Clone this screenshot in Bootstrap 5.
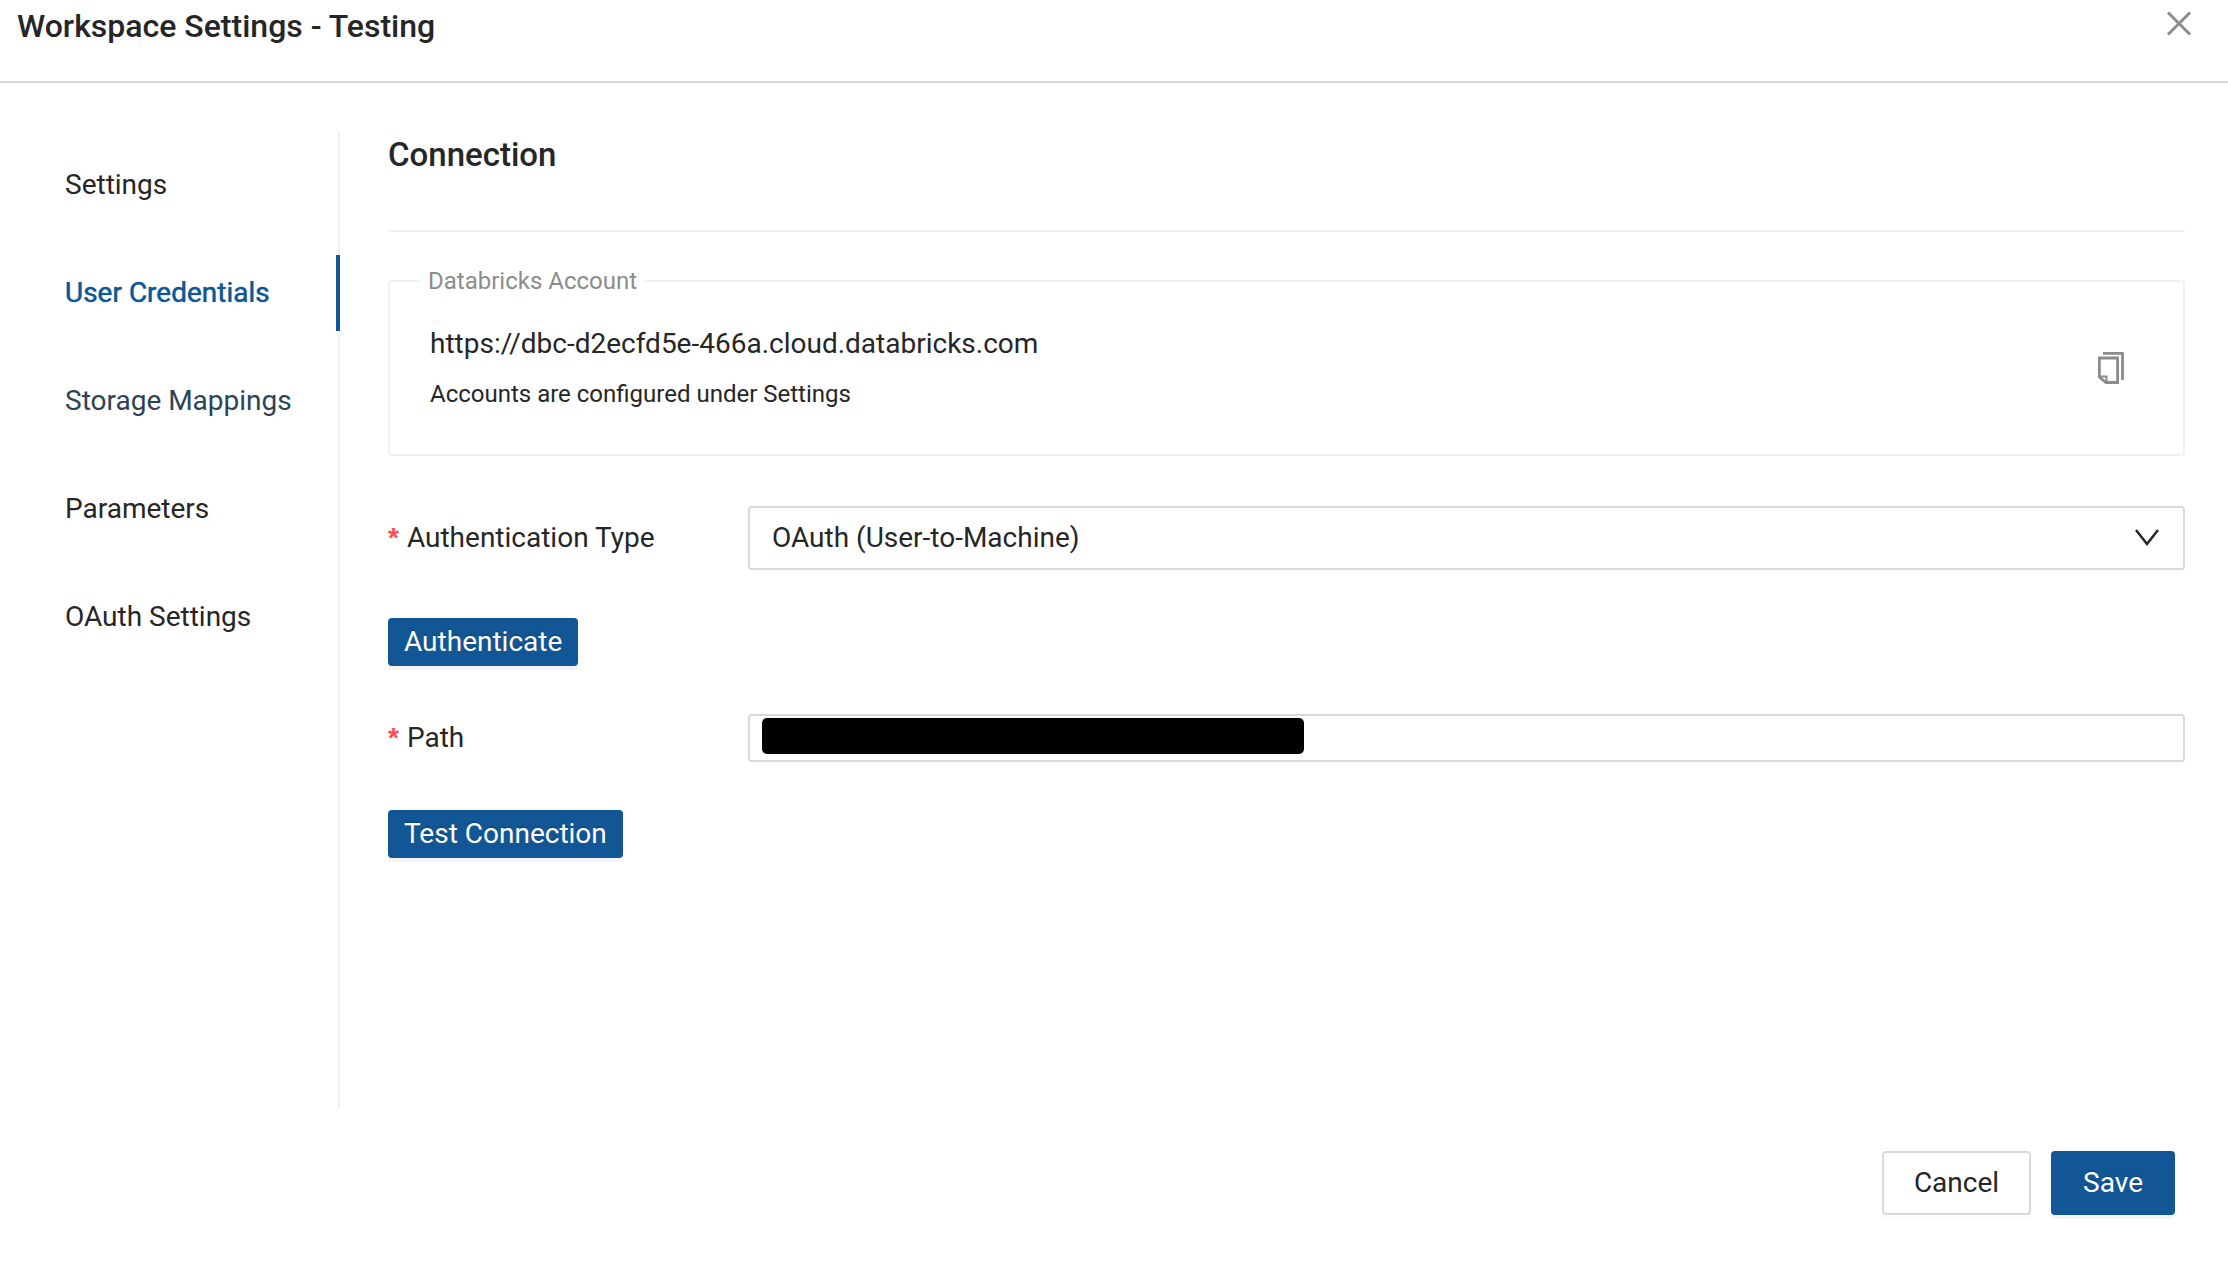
<!DOCTYPE html>
<html lang="en">
<head>
<meta charset="utf-8">
<meta name="viewport" content="width=device-width, initial-scale=1">
<title>Workspace Settings - Testing</title>
<link href="https://cdn.jsdelivr.net/npm/bootstrap@5.3.0/dist/css/bootstrap.min.css" rel="stylesheet">
<style>
  :root { --brand: #125695; --ink: #262626; --line: #d9d9d9; --soft: #f0f0f0; }
  body { font-family: Roboto, "Liberation Sans", sans-serif; font-size: 28px; line-height: 44px; color: var(--ink); background: #fff; }
  .ws-head { padding: 4px 34px 33px 17px; border-bottom: 2px solid var(--line); }
  .ws-title { font-size: 32px; line-height: 44px; font-weight: 500; }
  .pane-head .ws-title { font-size: 33px; }
  .icon-btn { border: 0; background: none; padding: 0; display: flex; color: #8c8c8c; }
  .ws-body { padding: 48px 43px 0 17px; }
  .side { width: 323px; flex: none; min-height: 978px; padding-top: 16px; border-right: 2px solid var(--soft); gap: 32px; }
  .side-link { padding: 16px 48px; margin-right: -2px; border-right: 4px solid transparent; color: var(--ink); text-decoration: none; white-space: nowrap; }
  .side-link.active { color: var(--brand); border-color: var(--brand); text-shadow: 0 0 1px currentColor; }
  .side-link.muted { color: #2c4356; }
  .pane { padding-left: 48px; min-width: 0; }
  .pane-head { padding: 2px 0 53px; border-bottom: 2px solid var(--soft); margin-bottom: 30px; }
  .account { border: 2px solid var(--soft); border-radius: 4px; padding: 22px 56px 40px 40px; margin-bottom: 50px; }
  .account legend { font-size: 24px; line-height: 38px; color: #8c8c8c; padding: 0 8px; margin: 0 0 0 -10px; }
  .fine { font-size: 24px; line-height: 40px; }
  .field-row { margin-bottom: 48px; }
  .field-label { flex: 0 0 360px; }
  .req { color: #ff4d4f; font-family: "Liberation Sans", sans-serif; font-weight: 700; margin-right: 8px; }
  .box { border: 2px solid var(--line); border-radius: 4px; font-size: 28px; line-height: 44px; color: var(--ink); padding: 0 22px; }
  select.box { height: 64px; appearance: none; background: #fff; }
  input.box { height: 48px; }
  .chev { position: absolute; right: 25px; top: 22px; pointer-events: none; }
  .redact { position: absolute; left: 14px; top: 4px; width: 542px; height: 36px; border-radius: 5px; background: #000; }
  .btn { --bs-btn-font-size: 28px; --bs-btn-line-height: 44px; --bs-btn-border-width: 2px; --bs-btn-border-radius: 4px; --bs-btn-padding-x: 14px; --bs-btn-padding-y: 0; }
  .btn-brand { --bs-btn-color: #fff; --bs-btn-bg: var(--brand); --bs-btn-border-color: var(--brand); --bs-btn-hover-color: #fff; --bs-btn-hover-bg: #0e4880; box-shadow: 0 4px 0 rgba(0,0,0,.045); text-shadow: 0 -2px 0 rgba(0,0,0,.12); }
  .btn-plain { --bs-btn-color: var(--ink); --bs-btn-bg: #fff; --bs-btn-border-color: var(--line); --bs-btn-hover-bg: #fafafa; box-shadow: 0 4px 0 rgba(0,0,0,.016); }
  .btn-tall { --bs-btn-padding-x: 30px; --bs-btn-padding-y: 8px; }
  .ws-foot { gap: 20px; padding: 42px 53px 49px 0; }
</style>
<script src="https://cdn.jsdelivr.net/npm/bootstrap@5.3.0/dist/js/bootstrap.bundle.min.js"></script>
</head>
<body>
<header class="ws-head d-flex justify-content-between align-items-center">
  <h1 class="ws-title mb-0">Workspace Settings - Testing</h1>
  <button type="button" class="icon-btn" aria-label="Close">
    <svg width="30" height="30" viewBox="0 0 30 30" fill="none" stroke="currentColor" stroke-width="3"><path d="M4 1.500L26 23.500M26 1.500L4 23.500"/></svg>
  </button>
</header>

<div class="ws-body d-flex">
  <nav class="side d-flex flex-column" aria-label="Workspace settings">
    <a class="side-link" href="#">Settings</a>
    <a class="side-link active" href="#" aria-current="page">User Credentials</a>
    <a class="side-link muted" href="#">Storage Mappings</a>
    <a class="side-link" href="#">Parameters</a>
    <a class="side-link" href="#">OAuth Settings</a>
  </nav>

  <main class="pane flex-grow-1">
    <div class="pane-head"><h2 class="ws-title mb-0">Connection</h2></div>

    <fieldset class="account">
      <legend class="float-none w-auto">Databricks Account</legend>
      <div class="d-flex justify-content-between align-items-center">
        <div>
          <div class="mb-2">https://dbc-d2ecfd5e-466a.cloud.databricks.com</div>
          <div class="fine">Accounts are configured under Settings</div>
        </div>
        <button type="button" class="icon-btn" aria-label="Copy account URL">
          <svg width="30" height="32" viewBox="0 0 30 32" fill="none" stroke="currentColor" stroke-width="2.800"><path d="M6 1.400H25.500V28"/><path d="M2.400 6H20.600V30.500H9L2.400 25Z"/><path d="M2.400 24.500H9.500V30.500" stroke-width="2"/></svg>
        </button>
      </div>
    </fieldset>

    <form>
      <div class="field-row d-flex align-items-center">
        <label class="field-label d-flex align-items-center" for="auth"><span class="req">*</span>Authentication Type</label>
        <div class="position-relative flex-grow-1">
          <select id="auth" class="box w-100"><option>OAuth (User-to-Machine)</option></select>
          <svg class="chev" width="26" height="18" viewBox="0 0 26 18" fill="none" stroke="currentColor" stroke-width="2.500"><path d="M2 2L13 16L24 2"/></svg>
        </div>
      </div>
      <div class="field-row d-flex"><button type="button" class="btn btn-brand">Authenticate</button></div>
      <div class="field-row d-flex align-items-center">
        <label class="field-label d-flex align-items-center" for="path"><span class="req">*</span>Path</label>
        <div class="position-relative flex-grow-1 d-flex">
          <input id="path" type="text" class="box w-100">
          <span class="redact"></span>
        </div>
      </div>
      <div class="d-flex"><button type="button" class="btn btn-brand">Test Connection</button></div>
    </form>
  </main>
</div>

<footer class="ws-foot d-flex justify-content-end">
  <button type="button" class="btn btn-plain btn-tall">Cancel</button>
  <button type="button" class="btn btn-brand btn-tall">Save</button>
</footer>
</body>
</html>
